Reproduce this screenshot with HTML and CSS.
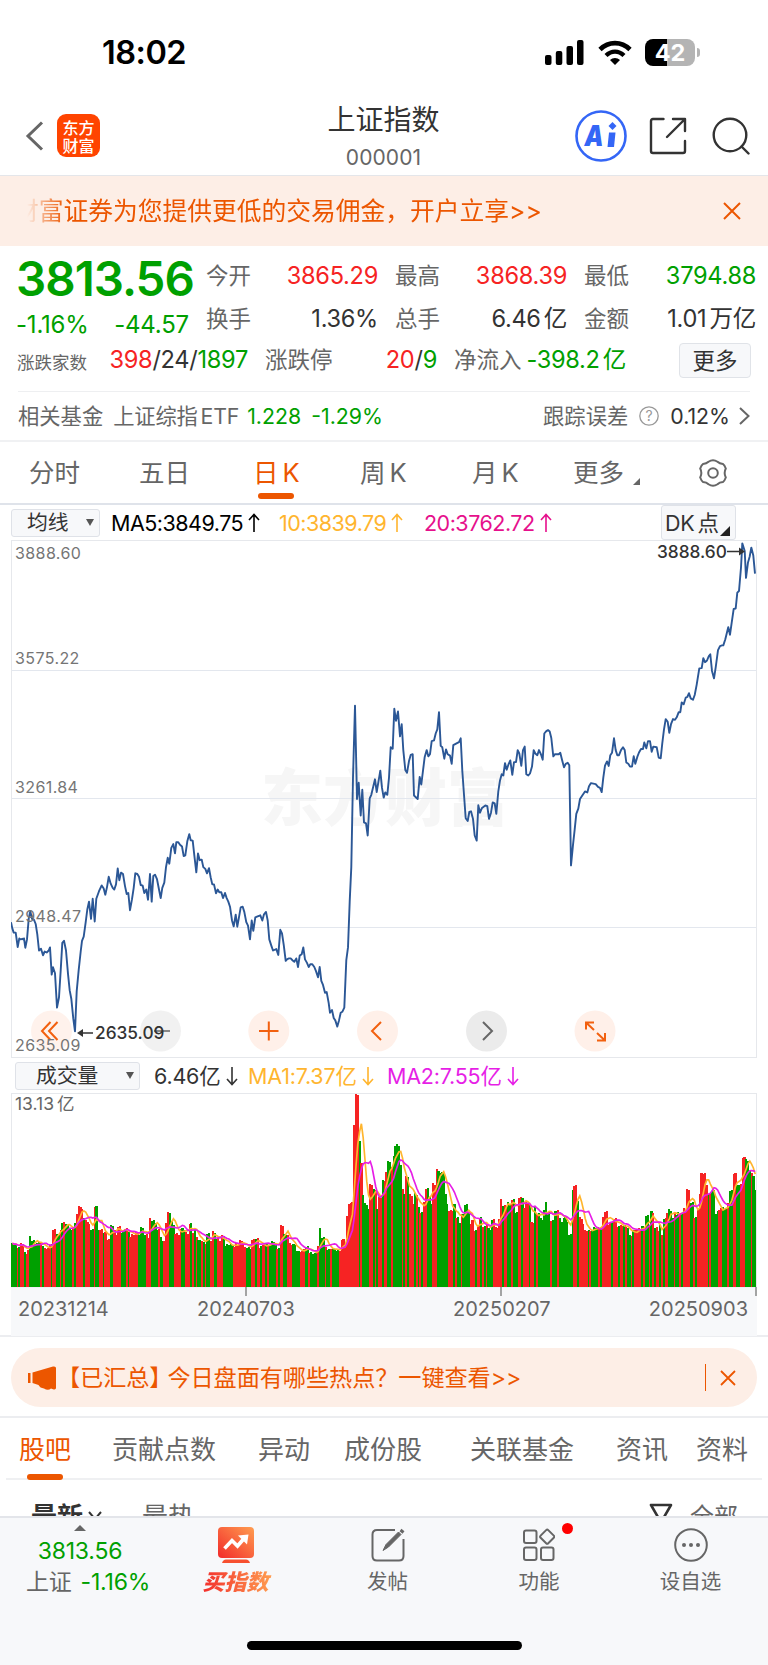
FILE: index.html
```html
<!DOCTYPE html>
<html lang="zh-CN">
<head>
    <meta charset="UTF-8">
    <meta name="viewport" content="width=device-width, initial-scale=1.0">
    <title>上证指数 000001</title>
    <link rel="stylesheet" href="styles.css">
</head>
<body>
    <div class="status-bar">
        <span class="clock">18:02</span>
        <div class="status-icons">
            <svg width="39" height="25" viewBox="0 0 39 25">
                <rect x="0" y="15" width="6.500" height="10" rx="2"/>
                <rect x="10.800" y="11" width="6.500" height="14" rx="2"/>
                <rect x="21.500" y="6" width="6.500" height="19" rx="2"/>
                <rect x="32" y="0" width="6.500" height="25" rx="2"/>
            </svg>
            <svg class="wifi" width="34" height="25" viewBox="0 0 34 25">
                <path d="M2 9.500C10.500 1 23.500 1 32 9.500" fill="none" stroke="#000" stroke-width="4.600"/>
                <path d="M8 15.500C13.300 10.200 20.700 10.200 26 15.500" fill="none" stroke="#000" stroke-width="4.200"/>
                <path d="M17 25L12 20C14.800 17.300 19.200 17.300 22 20Z"/>
            </svg>
            <div class="battery"><span>42</span></div>
        </div>
    </div>

    <header class="header">
        <div class="header-left">
            <svg width="20" height="30" viewBox="0 0 20 30" fill="none" stroke="#666" stroke-width="3"><path d="M18 1.500L4 15L18 28.500"/></svg>
            <div class="logo"><span>东方</span><span>财富</span></div>
        </div>
        <div class="header-title">
            <h1>上证指数</h1>
            <p>000001</p>
        </div>
        <div class="header-right">
            <svg width="52" height="52" viewBox="0 0 52 52">
                <circle cx="26" cy="26" r="24.500" fill="none" stroke="#3466f6" stroke-width="2.600"/>
                <text class="ai" x="9.500" y="36" textLength="19" lengthAdjust="spacingAndGlyphs">A</text>
                <path d="M34 22.500H40.500L39 37H32.500Z" fill="#3466f6"/>
                <path d="M37.500 12L41.500 16L37.500 20L33.500 16Z" fill="#3466f6"/>
            </svg>
            <svg class="share" width="38" height="38" viewBox="0 0 38 38" fill="none" stroke="#333" stroke-width="2.400" stroke-linecap="round" stroke-linejoin="round">
                <path d="M14.500 2H4Q2 2 2 4V34Q2 36 4 36H34Q36 36 36 34V24"/>
                <path d="M24 2H36V14M36 2L18 20"/>
            </svg>
            <svg width="38" height="38" viewBox="0 0 38 38" fill="none" stroke="#333" stroke-width="2.400" stroke-linecap="round">
                <circle cx="18" cy="18" r="16.300"/>
                <path d="M29.500 29.500L36.500 36.500"/>
            </svg>
        </div>
    </header>

    <div class="banner">
        <div class="marquee"><span>财富证券为您提供更低的交易佣金，开户立享&gt;&gt;</span></div>
        <svg width="18" height="18" viewBox="0 0 18 18" fill="none" stroke="#ec5600" stroke-width="2"><path d="M1 1L17 17M17 1L1 17"/></svg>
    </div>

    <section class="quote">
        <div class="quote-top">
            <div class="quote-price">
                <div class="price green">3813.56</div>
                <div class="change green"><span>-1.16%</span><span>-44.57</span></div>
            </div>
            <div class="quote-grid">
                <div class="cell"><label>今开</label><span class="red">3865.29</span></div>
                <div class="cell"><label>最高</label><span class="red">3868.39</span></div>
                <div class="cell"><label>最低</label><span class="green">3794.88</span></div>
                <div class="cell"><label>换手</label><span>1.36%</span></div>
                <div class="cell"><label>总手</label><span>6.46<i></i>亿</span></div>
                <div class="cell"><label>金额</label><span>1.01<i></i>万亿</span></div>
            </div>
        </div>
        <div class="quote-row">
            <div class="cell"><label class="small">涨跌家数</label><span><b class="red">398</b>/24/<b class="green">1897</b></span></div>
            <div class="cell"><label>涨跌停</label><span><b class="red">20</b>/<b class="green">9</b></span></div>
            <div class="cell"><label>净流入</label><span class="green">-398.2<i></i>亿</span></div>
            <button class="more">更多</button>
        </div>
        <div class="fund">
            <span>相关基金</span>
            <span class="fund-name">上证综指<i></i>ETF</span>
            <span class="fund-price green">1.228</span>
            <span class="green">-1.29%</span>
            <span class="fund-track">跟踪误差</span>
            <svg width="20" height="20" viewBox="0 0 20 20"><circle cx="10" cy="10" r="9.200" fill="none" stroke="#999" stroke-width="1.300"/><text class="question" x="10" y="15">?</text></svg>
            <span class="fund-error">0.12%</span>
            <svg width="11" height="18" viewBox="0 0 11 18" fill="none" stroke="#666" stroke-width="2"><path d="M1 1L9.500 9L1 17"/></svg>
        </div>
    </section>

    <nav class="period-tabs">
        <span>分时</span>
        <span>五日</span>
        <span class="active">日<i></i>K</span>
        <span>周<i></i>K</span>
        <span>月<i></i>K</span>
        <span class="has-corner">更多</span>
        <svg width="30" height="28" viewBox="0 0 30 28" fill="none" stroke="#666" stroke-width="2">
            <path d="M10.500 2.800Q15 -0.300 19.500 2.800Q21.500 4.800 25 5Q26.500 6 27.800 9.500Q25.500 14 27.800 18.500Q26.500 22 25 23Q21.500 23.200 19.500 25.200Q15 28.300 10.500 25.200Q8.500 23.200 5 23Q3.500 22 2.200 18.500Q4.500 14 2.200 9.500Q3.500 6 5 5Q8.500 4.800 10.500 2.800Z"/>
            <circle cx="15" cy="14" r="4.800"/>
        </svg>
    </nav>

    <section class="charts">
        <div class="legend">
            <div class="select">均线<em></em></div>
            <span class="ma5">MA5:3849.75<svg class="arrow" width="12" height="20" viewBox="0 0 12 20"><path d="M6 19V2M1 7L6 1.500L11 7"/></svg></span>
            <span class="ma10">10:3839.79<svg class="arrow" width="12" height="20" viewBox="0 0 12 20"><path d="M6 19V2M1 7L6 1.500L11 7"/></svg></span>
            <span class="ma20">20:3762.72<svg class="arrow" width="12" height="20" viewBox="0 0 12 20"><path d="M6 19V2M1 7L6 1.500L11 7"/></svg></span>
            <div class="dk">DK<i></i>点</div>
        </div>

        <svg class="price-chart" width="746" height="518" viewBox="0 0 746 518">
            <text class="watermark" x="250" y="281">东方财富</text>
            <path class="grid" d="M0 130.500H746M0 258.500H746M0 387.500H746"/>
            <rect class="frame" x="0.500" y="0.500" width="745" height="517"/>
            <polyline id="priceLine" class="price-line"/>
            <g fill="#fff0e9">
                <circle cx="40.500" cy="491" r="20.500" fill-opacity=".85"/>
                <circle cx="149.500" cy="491" r="20.500" fill="#eee" fill-opacity=".8"/>
                <circle cx="257.800" cy="491" r="20.500"/>
                <circle cx="366.500" cy="491" r="20.500"/>
                <circle cx="475.500" cy="491" r="20.500" fill="#ebebeb"/>
                <circle cx="584" cy="491" r="20.500"/>
            </g>
            <g fill="none" stroke="#f2600f" stroke-width="2">
                <path d="M39.500 482L31 491L39.500 500M46.500 482L38 491L46.500 500"/>
                <path d="M248 491H267.500M257.800 481.500V500.500"/>
                <path d="M370 482L361 491L370 500"/>
                <path d="M575 489.500V482.500H583M575.500 483L583 490M594 493V500.500H586M593.500 500L586 493"/>
                <path d="M143 491H159" stroke="#888"/>
                <path d="M472 482L481 491L472 500" stroke="#666"/>
            </g>
            <g class="scale">
                <text x="4" y="19">3888.60</text>
                <text x="4" y="123.500">3575.22</text>
                <text x="4" y="252.500">3261.84</text>
                <text x="4" y="381.500">2948.47</text>
                <text x="4" y="510.500">2635.09</text>
            </g>
            <g class="extreme">
                <text x="84" y="499">2635.09</text>
                <text x="646" y="18">3888.60</text>
                <path d="M82 493H68M716 11.500H732" stroke="#333" stroke-width="1.500"/>
                <path d="M66 493L72 489V497ZM734 11.500L728 7.500V15.500Z"/>
            </g>
        </svg>

        <div class="legend legend-volume">
            <div class="select select-wide">成交量<em></em></div>
            <span class="vol">6.46亿<svg class="arrow" width="12" height="20" viewBox="0 0 12 20"><path d="M6 1V18M1 13L6 18.500L11 13"/></svg></span>
            <span class="vol-ma1">MA1:7.37亿<svg class="arrow" width="12" height="20" viewBox="0 0 12 20"><path d="M6 1V18M1 13L6 18.500L11 13"/></svg></span>
            <span class="vol-ma2">MA2:7.55亿<svg class="arrow" width="12" height="20" viewBox="0 0 12 20"><path d="M6 1V18M1 13L6 18.500L11 13"/></svg></span>
        </div>

        <svg class="volume-chart" width="746" height="204" viewBox="0 0 746 204">
            <rect class="frame" x="0.500" y="0.500" width="745" height="194"/>
            <rect y="194.500" width="746" height="10" fill="#f7f8fa"/>
            <g transform="translate(-11 -43) scale(.33333)">
                <g id="volumeBars" shape-rendering="crispEdges"></g>
                <polyline id="volumeMa1" class="vma" stroke="#ffb52e"/>
                <polyline id="volumeMa2" class="vma" stroke="#e61ee6"/>
            </g>
            <path d="M235 194V203M490 194V203M745 194V203" stroke="#888" stroke-width="1.500"/>
            <text class="vol-max" x="4" y="17">13.13<tspan dx="3">亿</tspan></text>
        </svg>
        <div class="dates">
            <span>20231214</span>
            <span>20240703</span>
            <span>20250207</span>
            <span>20250903</span>
        </div>
    </section>

    <div class="notice-wrap">
        <div class="notice">
            <svg width="29" height="24" viewBox="0 0 29 24" fill="#ec5600">
                <path d="M0 7H2.500V17H0ZM4.500 6.500L25 0.500Q28 0 28 2V22Q28 24 25 23.200L23 22.500Q20 25 16 22.500Q12 22 10.500 19L4.500 17Z"/>
            </svg>
            <p><span class="bracket">【已汇总】</span>今日盘面有哪些热点？一键查看&gt;&gt;</p>
            <span class="divider"></span>
            <svg width="16" height="16" viewBox="0 0 16 16" fill="none" stroke="#ec5600" stroke-width="1.800"><path d="M1 1L15 15M15 1L1 15"/></svg>
        </div>
    </div>

    <nav class="info-tabs">
        <span class="active">股吧</span>
        <span>贡献点数</span>
        <span>异动</span>
        <span>成份股</span>
        <span>关联基金</span>
        <span>资讯</span>
        <span>资料</span>
    </nav>

    <div class="sort-row">
        <b>最新</b>
        <svg width="14" height="10" viewBox="0 0 14 10" fill="none" stroke="#333" stroke-width="2"><path d="M1 1L7 8L13 1"/></svg>
        <span class="hot">最热</span>
        <svg class="filter" width="24" height="26" viewBox="0 0 24 26" fill="none" stroke="#333" stroke-width="2.600"><path d="M2 2H22L14.500 15V24L9.500 21V15Z" stroke-linejoin="round"/></svg>
        <span class="all">全部</span>
    </div>

    <footer class="bottom-bar">
        <div class="bottom-items">
            <div class="index-item">
                <em></em>
                <span class="green">3813.56</span>
                <p>上证<span class="green">-1.16%</span></p>
            </div>
            <div class="item buy">
                <svg width="36" height="36" viewBox="0 0 36 36">
                    <defs>
                        <linearGradient id="hot" x1="0" y1="1" x2="1" y2="0"><stop offset="0" stop-color="#f22a2a"/><stop offset="1" stop-color="#ff9d50"/></linearGradient>
                    </defs>
                    <rect width="36" height="31" rx="4" fill="url(#hot)"/>
                    <path d="M4 36Q5 32.500 8 32.500H28Q31 32.500 32 36Z" fill="#f7502f"/>
                    <path d="M6.500 21.500L14 13.500L19.500 19L26.500 11" fill="none" stroke="#fff" stroke-width="3.600"/>
                    <path d="M20 8.500L30.500 7.500L29 17.500Z" fill="#fff"/>
                </svg>
                <span>买指数</span>
            </div>
            <div class="item">
                <svg width="34" height="34" viewBox="0 0 34 34" fill="none" stroke="#666" stroke-width="2">
                    <path d="M24 2H6Q1.500 2 1.500 6.500V28Q1.500 32.500 6 32.500H28Q32.500 32.500 32.500 28V11"/>
                    <path d="M12 22.500L15 16.500L27.500 4L30 6.500L17.500 19Z" fill="#666" stroke-width="1"/>
                    <path d="M29.500 2L32.500 4.500" stroke-width="3"/>
                </svg>
                <span>发帖</span>
            </div>
            <div class="item badge">
                <svg width="32" height="33" viewBox="0 0 32 33" fill="none" stroke="#666" stroke-width="2">
                    <rect x="1" y="2" width="12.500" height="12.500" rx="2"/>
                    <rect x="1" y="19" width="12.500" height="12.500" rx="2"/>
                    <rect x="18" y="19" width="12.500" height="12.500" rx="2"/>
                    <rect x="18.800" y="2.800" width="10.800" height="10.800" rx="1.500" transform="rotate(45 24.200 8.200)"/>
                </svg>
                <span>功能</span>
            </div>
            <div class="item">
                <svg width="34" height="34" viewBox="0 0 34 34">
                    <circle cx="17" cy="17" r="15.800" fill="none" stroke="#666" stroke-width="2"/>
                    <g fill="#666"><circle cx="10" cy="17" r="2"/><circle cx="17" cy="17" r="2"/><circle cx="24" cy="17" r="2"/></g>
                </svg>
                <span>设自选</span>
            </div>
        </div>
        <div class="home-indicator"></div>
    </footer>

    <script src="script.js"></script>
</body>
</html>
```
FILE: styles.css
```css
* {
    box-sizing: border-box;
}

body {
    margin: 0;
    width: 768px;
    height: 1665px;
    overflow: hidden;
    background-color: #ffffff;
    color: #333333;
    font-family: Inter, "Noto Sans CJK SC", sans-serif;
    display: flex;
    flex-direction: column;
}

body > * {
    flex: none;
}

svg {
    display: block;
    flex: none;
}

p, h1 {
    margin: 0;
    font-weight: 400;
}

i {
    display: inline-block;
    width: 3px;
}

.red {
    color: #f62323;
}

.green {
    color: #00a000;
}

/* Status bar */
.status-bar {
    height: 96px;
    padding: 8px 68px 0 102px;
    display: flex;
    align-items: center;
    justify-content: space-between;
}

.clock {
    font-size: 32.500px;
    font-weight: 600;
    color: #000000;
    letter-spacing: -0.5px;
}

.status-icons {
    display: flex;
    align-items: center;
    gap: 14px;
}

.wifi {
    margin-right: -1px;
}

.battery {
    position: relative;
    width: 50px;
    height: 27px;
    margin-right: 5px;
    border-radius: 8px;
    background: linear-gradient(90deg, #000 43%, #b4b4b4 43%);
    color: #ffffff;
    font-size: 23.500px;
    font-weight: 700;
    line-height: 27px;
    text-align: center;
}

.battery::after {
    content: "";
    position: absolute;
    right: -5px;
    top: 9px;
    width: 3px;
    height: 9px;
    border-radius: 0 4px 4px 0;
    background-color: #b4b4b4;
}

/* Header */
.header {
    height: 80px;
    padding: 0 19px 0 24px;
    display: grid;
    grid-template-columns: 190px 1fr 174px;
    align-items: center;
    border-bottom: 1px solid #e4e6ea;
}

.header-left {
    display: flex;
    align-items: center;
    gap: 13px;
}

.logo {
    width: 43px;
    height: 43px;
    border-radius: 9px;
    background-color: #ff4400;
    color: #ffffff;
    font-family: "Noto Sans CJK SC", sans-serif;
    font-size: 16px;
    font-weight: 500;
    line-height: 18px;
    padding-top: 4px;
    text-align: center;
}

.logo span {
    display: block;
    height: 18px;
}

.header-title {
    text-align: center;
    padding-right: 22px;
}

.header-title h1 {
    font-size: 28px;
    line-height: 38px;
    margin-top: 1px;
}

.header-title p {
    font-size: 21px;
    line-height: 28px;
    margin-top: 5px;
    color: #666666;
    letter-spacing: 0.1px;
}

.header-right {
    display: flex;
    align-items: center;
}

.share {
    margin: 0 25px 0 22px;
}

.ai {
    font-family: Inter, sans-serif;
    font-size: 28px;
    font-weight: 900;
    font-style: italic;
    fill: #3466f6;
}

/* Orange banner */
.banner {
    height: 70px;
    padding: 0 27px;
    display: flex;
    align-items: center;
    justify-content: space-between;
    background-color: #fdeee6;
    color: #ec5600;
}

.marquee {
    width: 640px;
    overflow: hidden;
    font-size: 24.750px;
    line-height: 36px;
    white-space: nowrap;
    -webkit-mask-image: linear-gradient(90deg, transparent, #000 38px);
    mask-image: linear-gradient(90deg, transparent, #000 38px);
}

.marquee span {
    margin-left: -13px;
}

/* Quote */
.quote {
    height: 196px;
    border-bottom: 2px solid #f0f1f3;
    line-height: 30px;
}

.quote-top {
    display: flex;
    height: 95px;
    padding: 8px 12px 0 16px;
}

.quote-price {
    width: 190px;
}

.price {
    font-size: 47.500px;
    font-weight: 600;
    line-height: 50px;
    letter-spacing: -1px;
}

.change {
    display: flex;
    justify-content: space-between;
    width: 173px;
    font-size: 24px;
    margin-top: 6px;
    letter-spacing: -0.2px;
}

.quote-grid {
    flex: 1;
    display: grid;
    grid-template-columns: repeat(3, 172px);
    grid-auto-rows: 43px;
    column-gap: 17px;
}

.cell {
    display: flex;
    align-items: center;
    justify-content: space-between;
    font-size: 23.600px;
    letter-spacing: -0.3px;
    white-space: nowrap;
}

.cell b {
    font-weight: 400;
}

.cell label {
    color: #666666;
    font-size: 22.500px;
    letter-spacing: 0;
}

.cell .small {
    font-size: 17.500px;
    padding-top: 5px;
}

.quote-row {
    height: 50px;
    margin: 0 16px 0 17px;
    padding-bottom: 12px;
    display: grid;
    grid-template-columns: 231px 172px 172px 72px;
    column-gap: 17px;
}

.quote-row .more {
    margin-left: 36px;
}

.more {
    width: 72px;
    height: 35px;
    margin-top: 2px;
    padding: 0;
    border: 1px solid #e0e3e8;
    border-radius: 4px;
    background-color: #f7f8fa;
    color: #333333;
    font: 22.500px/32px Inter, "Noto Sans CJK SC", sans-serif;
}

.fund {
    height: 49px;
    margin: 0 18px;
    border-top: 1px solid #eeeff1;
    display: flex;
    align-items: center;
    font-size: 21.300px;
    color: #666666;
    white-space: nowrap;
}

.fund-name {
    margin-left: 10px;
    width: 134px;
    letter-spacing: -0.2px;
}

.fund-price {
    width: 64px;
}

.fund-track {
    margin-left: auto;
    margin-right: 11px;
}

.fund-error {
    margin: 0 9px 0 11px;
    color: #333333;
}

.question {
    font-size: 14px;
    fill: #999999;
    text-anchor: middle;
}

/* Period tabs */
.period-tabs {
    height: 63px;
    padding-left: 29px;
    display: grid;
    grid-template-columns: 110px 114px 107px 112px 101px 125px auto;
    align-items: center;
    justify-content: start;
    justify-items: start;
    border-bottom: 2px solid #dfe3ea;
    color: #666666;
    font-size: 25.500px;
    line-height: 61px;
}

.period-tabs i {
    width: 4px;
}

.active {
    position: relative;
    color: #ec5600;
}

.active::after {
    content: "";
    position: absolute;
    left: 50%;
    bottom: 4px;
    width: 36px;
    height: 6px;
    margin-left: -18px;
    border-radius: 3px;
    background-color: #ec5600;
}

.has-corner {
    position: relative;
}

.has-corner::after {
    content: "";
    position: absolute;
    right: -16px;
    bottom: 18px;
    border-left: 7px solid transparent;
    border-bottom: 7px solid #666666;
}

/* Charts */
.charts {
    height: 832px;
    padding: 0 11px;
    border-bottom: 2px solid #ecedf0;
}

.legend {
    height: 35px;
    display: flex;
    align-items: center;
    font-size: 21.500px;
    line-height: 28px;
    white-space: nowrap;
}

.legend > span {
    display: flex;
    align-items: center;
    letter-spacing: -0.5px;
}

.select {
    width: 89px;
    height: 28px;
    padding-left: 15px;
    border: 1px solid #dfe2e8;
    border-radius: 3px;
    background-color: #f7f8fa;
    font-size: 20.800px;
    line-height: 25px;
    display: flex;
    justify-content: space-between;
}

.select em {
    margin: 9px 5px 0 0;
    height: 0;
    border: 4px solid transparent;
    border-top: 7px solid #555555;
    border-bottom: 0;
}

.arrow {
    margin-left: 5px;
    fill: none;
    stroke: currentColor;
    stroke-width: 1.600;
}

.ma5 {
    width: 168px;
    margin-left: 11px;
    color: #000000;
}

.ma10 {
    width: 145px;
    color: #ffb52e;
}

.ma20 {
    color: #e6108c;
}

.dk {
    position: relative;
    width: 75px;
    height: 35px;
    margin-left: auto;
    margin-right: 21px;
    padding-left: 3px;
    border: 1px solid #dfe2e8;
    border-radius: 3px;
    background-color: #f7f8fa;
    line-height: 34px;
    letter-spacing: -0.3px;
}

.dk::after {
    content: "";
    position: absolute;
    right: 5px;
    bottom: 3px;
    border-left: 10px solid transparent;
    border-bottom: 10px solid #222222;
}

.frame {
    fill: none;
    stroke: #e6e8ec;
}

.grid {
    stroke: #e3e7ee;
    fill: none;
}

.watermark {
    font-family: "Noto Sans CJK SC", sans-serif;
    font-size: 62px;
    font-weight: 900;
    fill: #f6f6f6;
}

.price-line {
    fill: none;
    stroke: #2b5796;
    stroke-width: 1.900;
    stroke-linejoin: round;
}

.scale {
    font-size: 16px;
    letter-spacing: 0.4px;
    fill: #757575;
}

.extreme {
    font-size: 17.300px;
    font-weight: 500;
    fill: #333333;
}

.legend-volume > span {
    font-size: 21.500px;
    letter-spacing: -0.2px;
}

.select-wide {
    width: 125px;
    margin-left: 4px;
    padding-left: 20px;
}

.vol {
    width: 94px;
    margin-left: 14px;
}

.vol-ma1 {
    width: 139px;
    color: #ffb52e;
}

.vol-ma2 {
    color: #e61ee6;
}

.vma {
    fill: none;
    stroke-width: 5;
}

.vol-max {
    font-size: 17.500px;
    fill: #666666;
}

.dates {
    height: 39px;
    padding: 0 9px 0 7px;
    display: grid;
    grid-template-columns: 179px 256px 1fr auto;
    background-color: #f7f8fa;
    color: #666666;
    font-size: 20px;
    line-height: 25px;
}

/* Notice */
.notice-wrap {
    height: 81px;
    padding: 11px 11px 0;
    border-bottom: 2px solid #ecedf0;
}

.notice {
    height: 59px;
    padding: 0 21px 0 17px;
    border-radius: 30px;
    background-color: #fdeee6;
    color: #ec5600;
    display: flex;
    align-items: center;
    font-size: 23.200px;
    line-height: 30px;
    white-space: nowrap;
}

.notice p {
    flex: 1;
    letter-spacing: -0.1px;
}

.bracket {
    margin-right: -5px;
}

.divider {
    width: 1.500px;
    height: 27px;
    margin-right: 14px;
    background-color: #ec5600;
}

/* Info tabs */
.info-tabs {
    height: 62px;
    margin: 0 6px;
    padding-left: 13px;
    display: grid;
    grid-template-columns: 93px 146px 86px 126px 146px 80px auto;
    justify-content: start;
    justify-items: start;
    border-bottom: 2px solid #eff0f2;
    color: #666666;
    font-size: 26px;
    line-height: 64px;
}

.info-tabs .active::after {
    bottom: 2px;
}

.sort-row {
    height: 36px;
    padding: 18px 30px 0 31px;
    overflow: hidden;
    display: flex;
    align-items: flex-start;
    font-size: 26px;
    line-height: 37px;
}

.sort-row > svg {
    margin: 13px 0 0 5px;
}

.sort-row .hot {
    margin-left: 40px;
    color: #666666;
}

.sort-row .filter {
    margin: 5px 17px 0 auto;
}

.sort-row .all {
    font-size: 24px;
    color: #666666;
}

/* Bottom bar */
.bottom-bar {
    height: 149px;
    border-top: 2px solid #e3e5ea;
    background-color: #f7f8fa;
}

.bottom-items {
    height: 123px;
    padding: 0 2px 0 10px;
    display: grid;
    grid-template-columns: 151px 151px 151px 152px 151px;
}

.item {
    display: flex;
    flex-direction: column;
    align-items: center;
    padding-top: 9px;
    color: #666666;
    font-size: 20.500px;
    line-height: 30px;
}

.item span {
    margin-top: 4px;
}

.item svg {
    height: 36px;
}

.badge {
    position: relative;
}

.badge::after {
    content: "";
    position: absolute;
    left: 99px;
    top: 5px;
    width: 11px;
    height: 11px;
    border-radius: 50%;
    background-color: #ff0000;
}

.buy {
    padding-right: 2px;
}

.buy span {
    padding: 0 3px;
    font-size: 22px;
    font-weight: 900;
    font-style: italic;
    background: linear-gradient(90deg, #f22a2a, #ff9d50);
    -webkit-background-clip: text;
    background-clip: text;
    color: transparent;
}

.index-item {
    display: flex;
    flex-direction: column;
    align-items: center;
    padding-top: 7px;
    font-size: 23px;
    line-height: 31px;
    letter-spacing: -0.2px;
    color: #666666;
    width: 140px;
}

.index-item em {
    border: 6.500px solid transparent;
    border-bottom: 6px solid #666666;
    border-top: 0;
    margin-bottom: 5px;
}

.index-item p {
    margin-left: 16px;
    white-space: nowrap;
}

.index-item p span {
    margin-left: 9px;
}

.home-indicator {
    width: 275px;
    height: 9px;
    margin: 0 auto;
    border-radius: 5px;
    background-color: #000000;
}
```
FILE: script.js
```js
// Closing prices as x,y pairs on the 3x canvas
const pricePoints = `34,1140 38,1158 42,1170 48,1170 54,1212 59,1187 63,1190 68,1188 71,1190 73,1187 77,1214 82,1190 87,1130 92,1108 97,1130 103,1133 108,1145 113,1175 118,1222 124,1217 130,1236 135,1225 141,1228 147,1222 151,1213 156,1292 160,1271 166,1288 172,1388 178,1358 183,1280 188,1200 193,1194 199,1222 205,1290 210,1338 215,1362 221,1420 226,1457 231,1340 237,1278 243,1225 247,1194 252,1182 258,1140 263,1103 268,1080 274,1130 279,1072 285,1138 290,1072 298,1050 306,1033 312,1042 317,1060 322,1038 327,1008 333,1028 339,1040 344,1045 349,1030 354,984 359,1018 364,996 370,1000 376,1035 381,1058 386,1055 391,1105 397,1073 402,1040 407,998 413,1000 418,1008 423,1032 429,1034 434,1055 440,1045 445,1075 451,1000 456,1080 461,1006 466,1002 472,1015 478,1045 483,1070 488,1040 494,1025 499,980 504,953 509,970 515,924 521,913 526,940 530,908 536,908 541,915 547,920 552,948 557,946 563,905 569,884 573,902 579,903 584,945 590,995 595,940 600,960 606,958 611,980 617,985 622,998 628,983 633,1010 638,1030 643,1030 649,1056 654,1045 659,1053 665,1053 670,1070 676,1055 681,1070 686,1080 691,1095 697,1135 702,1152 708,1118 713,1153 718,1125 723,1097 729,1095 734,1110 740,1140 745,1150 751,1190 756,1135 761,1165 767,1126 772,1124 782,1120 788,1135 793,1117 799,1110 804,1135 809,1190 815,1208 820,1222 830,1218 836,1235 842,1162 847,1172 852,1205 858,1252 863,1247 868,1245 873,1245 879,1251 884,1255 890,1245 895,1270 900,1237 906,1233 911,1213 916,1248 922,1258 927,1270 932,1262 938,1262 944,1270 949,1282 955,1300 960,1270 965,1310 970,1322 976,1345 981,1343 987,1375 991,1403 997,1395 1002,1418 1007,1425 1013,1443 1018,1425 1023,1403 1028,1400 1034,1388 1040,1250 1045,1213 1050,1080 1055,980 1060,720 1066,511 1072,782 1077,735 1083,830 1088,755 1093,850 1099,853 1104,888 1110,780 1115,770 1126,725 1131,762 1142,700 1147,750 1152,778 1157,763 1163,770 1168,720
1173,632 1179,636 1184,520 1189,555 1195,528 1201,600 1206,565 1211,640 1217,698 1222,706 1228,672 1233,654 1239,652 1243,772 1254,782 1260,718 1265,740 1270,700 1275,660 1281,640 1286,658 1291,652 1296,614 1303,612 1308,592 1313,580 1318,530 1323,628 1328,632 1334,665 1339,638 1344,652 1351,656 1356,680 1361,626 1372,620 1378,617 1383,606 1388,700 1393,770 1398,838 1404,846 1409,820 1414,818 1420,840 1425,888 1431,903 1436,800 1441,822 1447,808 1457,801 1463,803 1468,840 1474,822 1479,792 1485,795 1490,825 1496,760 1501,728 1506,710 1511,714 1516,678 1521,697 1527,680 1532,670 1538,712 1543,675 1549,675 1554,640 1559,650 1565,686 1570,640 1575,630 1580,710 1586,714 1591,708 1597,688 1602,640 1607,650 1613,655 1618,640 1624,653 1629,668 1634,592 1640,585 1645,582 1650,586 1655,605 1661,658 1666,652 1677,652 1682,648 1687,668 1693,690 1698,680 1704,677 1709,684 1714,975 1720,915 1725,870 1730,825 1736,810 1741,782 1748,772 1756,760 1763,763 1768,745 1774,736 1788,739 1795,747 1801,750 1806,762 1811,720 1816,685 1822,673 1827,686 1832,655 1837,648 1843,606 1848,640 1853,655 1858,655 1864,640 1870,632 1875,640 1880,676 1886,680 1891,688 1897,688 1902,658 1907,680 1913,660 1918,647 1924,637 1930,637 1934,618 1940,635 1945,614 1951,614 1956,645 1961,630 1971,632 1977,662 1983,664 1988,620 1993,580 1998,550 2004,558 2009,590 2014,565 2020,550 2026,552 2031,545 2037,530 2042,530 2046,502 2052,507 2058,488 2063,486 2068,475 2073,490 2080,494 2085,480 2091,450 2099,403 2106,402 2111,373 2116,385 2122,380 2127,368 2132,362 2137,410 2143,432 2148,400 2155,350 2161,338 2167,336 2171,336 2177,318 2186,283 2191,305 2196,270 2202,230 2208,229 2213,183 2218,178 2224,110 2228,40 2235,62 2239,140 2245,95 2250,78 2255,52 2261,75 2266,128`;

// Volume runs: start x, bar top, colour (r = up, g = down, m = mixed days)
const volumeRuns = `34,580,g 48,588,m 60,578,m 74,606,m 80,596,r 86,557,r 94,570,g 106,575,g 118,574,m 124,588,m 137,595,r 148,582,m 159,535,r 169,552,g 179,540,r 186,512,r 196,522,g 208,535,g 220,520,g 225,495,g 228,488,r 234,466,r 244,474,r 249,505,r 258,515,r 268,538,g 282,467,g 290,535,g 299,537,r 309,545,g 320,565,r 330,524,g 340,540,r 346,550,g 352,529,r 362,545,g 373,532,g 384,545,g 390,556,m 395,550,r 405,542,r 411,550,g 421,529,g 432,552,m 440,545,r 443,560,m 448,504,r 454,508,g 462,520,g 470,535,g 478,555,g 486,570,g 491,573,r 497,514,r 502,484,r 512,510,m 518,524,g 524,548,r 540,535,g 555,545,r 566,518,r 576,545,m 582,540,g 588,555,r 594,568,m 600,570,g 610,575,m 619,550,g 630,568,r 636,543,g 646,565,m 655,570,r 662,553,r 673,585,m 680,582,g 700,588,g 705,580,m 715,568,r 727,578,r 732,590,g 754,568,r 764,562,r 775,588,r 781,585,m 790,582,r 800,582,m 812,572,g 822,580,g 827,590,m 838,525,r 849,550,g 860,552,g 866,580,r 876,580,g 888,600,m 895,603,r 908,590,m 914,588,g 925,604,m 935,605,g 952,585,m 957,532,r 963,557,g 973,590,m 979,595,g 990,590,m 1000,598,g 1016,598,r 1021,568,r 1032,580,r 1037,496,r 1042,457,r 1058,222,r 1064,130,r 1074,270,g 1079,340,r 1084,440,g 1086,430,r 1094,458,g 1102,475,g 1107,402,r 1118,415,r 1128,475,g 1133,440,r 1143,388,g 1155,362,r 1160,332,g
1172,350,r 1177,313,g 1184,284,r 1189,283,g 1198,345,m 1206,411,r 1212,430,g 1218,378,g 1228,432,r 1238,458,r 1243,430,g 1252,470,g 1256,482,m 1268,455,m 1272,412,r 1284,435,g 1290,460,m 1294,400,r 1306,357,r 1316,400,r 1320,365,g 1332,430,g 1338,455,g 1342,480,g 1352,480,m 1358,462,g 1364,498,m 1375,520,r 1380,488,r 1385,490,g 1391,460,g 1402,490,g 1407,518,g 1412,510,r 1418,538,m 1428,525,m 1434,500,r 1444,525,m 1455,525,r 1460,530,g 1466,540,g 1472,505,r 1482,530,m 1492,505,r 1498,442,r 1508,465,m 1519,456,g 1531,448,r 1541,485,g 1552,439,r 1562,443,g 1568,470,m 1574,455,r 1584,460,g 1590,488,g 1594,515,r 1600,468,r 1610,485,m 1618,505,g 1628,480,m 1632,450,r 1642,485,g 1648,508,m 1660,478,g 1665,480,r 1675,500,g 1682,515,g 1690,498,g 1700,515,r 1706,550,g 1714,415,g 1722,405,r 1732,450,r 1737,500,r 1748,518,r 1754,540,r 1762,538,m 1780,530,g 1795,530,g 1806,500,m 1813,482,r 1824,520,m 1830,515,g 1840,503,r 1850,525,m 1860,525,g 1865,525,m 1880,530,g 1887,555,g 1898,540,m 1905,535,r 1925,528,r 1937,495,g 1947,520,r 1953,482,g 1964,532,m 1972,540,r 1978,525,g 1984,548,r 1990,505,r 1998,484,r 2004,476,g 2014,500,m 2022,490,g 2032,485,m 2048,475,m 2056,455,r 2060,415,r 2071,455,g 2082,500,r 2090,470,r 2095,430,r 2104,368,r 2117,400,g 2124,430,m 2134,420,g 2145,485,g 2152,480,m 2163,470,m 2172,470,g 2180,460,m 2186,435,r 2190,420,g 2196,408,r 2200,365,r 2210,405,g 2216,402,r 2226,317,r 2236,328,g 2247,362,r 2256,375,g 2264,420,g`;

const step = 5.37;
const bottom = 711;
const colors = { r: '#f62323', g: '#00a000' };

function drawPrice() {
    const points = pricePoints.trim().split(/\s+/).map(p => {
        const [x, y] = p.split(',').map(Number);
        return ((x - 34) / 3).toFixed(1) + ',' + ((y - 30) / 2.904).toFixed(1);
    });
    document.getElementById('priceLine').setAttribute('points', points.join(' '));
}

function drawVolume() {
    const runs = volumeRuns.trim().split(/\s+/).map(r => {
        const [x, top, color] = r.split(',');
        return { x: +x, top: +top, color };
    });

    const bars = [];
    let html = '';
    let run = 0;
    for (let i = 0; 34 + i * step < 2266; i++) {
        const x = 34 + i * step;
        while (run < runs.length - 1 && runs[run + 1].x <= x + 2.7) run++;
        let color = runs[run].color;
        if (color === 'm') color = (i * 7) % 5 < 3 ? 'r' : 'g';
        // thin opposite-colour days inside the longer runs
        else if (i % 6 === 4 && (x < 1016 || x > 1080)) color = color === 'r' ? 'g' : 'r';
        const top = runs[run].top + (i * 13 % 5) * 1.5;
        bars.push({ x, top });
        html += `<rect x="${x.toFixed(1)}" y="${top}" width="6.5" height="${bottom - top}" fill="${colors[color]}"/>`;
    }
    document.getElementById('volumeBars').innerHTML = html;
    drawAverage('volumeMa1', bars, 5);
    drawAverage('volumeMa2', bars, 10);
}

function drawAverage(id, bars, days) {
    const points = bars.map((bar, i) => {
        const slice = bars.slice(Math.max(0, i - days + 1), i + 1);
        const avg = slice.reduce((sum, b) => sum + b.top, 0) / slice.length;
        return (bar.x + 3).toFixed(1) + ',' + avg.toFixed(1);
    });
    document.getElementById(id).setAttribute('points', points.join(' '));
}

drawPrice();
drawVolume();
```
